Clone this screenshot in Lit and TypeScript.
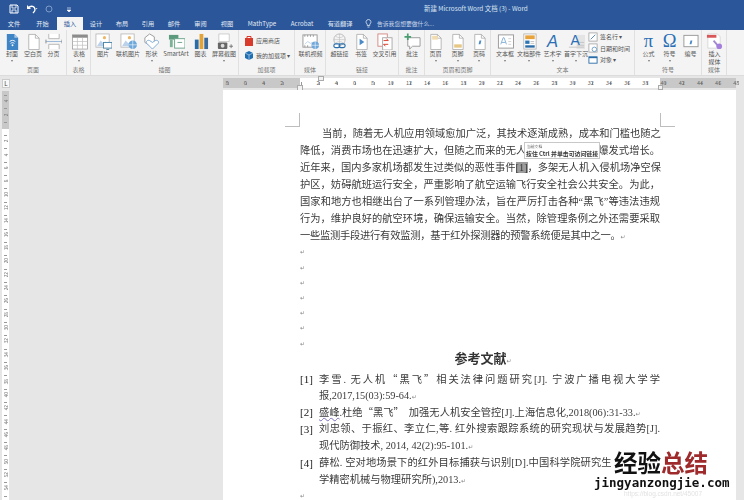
import { LitElement, html, css, svg } from "lit";
import { customElement } from "lit/decorators.js";

const B = "#2e75b6", O = "#e8a33d", R = "#d83b2b", P = "#fff";
const page = (extra: any = "") => svg`<path d="M4 1.5h7l4 4v12H4z" fill="${P}" stroke="#a6a6a6" stroke-width=".8"/><path d="M11 1.5v4h4" fill="none" stroke="#a6a6a6" stroke-width=".8"/>${extra}`;
const icons: Record<string, any> = {
  cover: svg`<path d="M3 1h8l4 4v13H3z" fill="#3f84c4"/><path d="M11 1v4h4z" fill="#a9c9e8"/><path d="M6 9c2-1.6 4-1.6 6 0M7 11c1.4-1 2.6-1 4 0" stroke="#fff" fill="none"/><circle cx="9" cy="13" r="1" fill="#fff"/>`,
  blank: page(),
  brk: svg`<path d="M4 1v5h11V1M4 17v-5h11v5" fill="#fff" stroke="#a6a6a6" stroke-width=".8"/><path d="M1 9h17" stroke="#7fa8cf" stroke-width=".8"/><path d="M1 7v4M18 7v4" stroke="#888"/>`,
  table: svg`<rect x="1.500" y="2" width="16" height="15" fill="#fff" stroke="#999" stroke-width=".8"/><path d="M1.500 2h16v3h-16z" fill="#8c8c8c"/><path d="M1.500 9h16M1.500 13h16M6.800 5v12M12.200 5v12" stroke="#bcbcbc" stroke-width=".7"/>`,
  pic: svg`<rect x="1" y="1" width="14" height="14" fill="#fff" stroke="#b0b0b0" stroke-width=".8"/><path d="M2 14l4-6 3 3 2-2 3 5z" fill="#bcd2ea"/><circle cx="10" cy="5" r="1.700" fill="#eeb765"/><rect x="9" y="10" width="9" height="6" fill="#fff" stroke="#4a85a8"/><path d="M12 17.500h3" stroke="#4a85a8"/>`,
  onpic: svg`<rect x="1" y="1" width="14" height="14" fill="#fff" stroke="#b0b0b0" stroke-width=".8"/><path d="M2 14l4-6 3 3 2-2 3 5z" fill="#bcd2ea"/><circle cx="10" cy="5" r="1.700" fill="#eeb765"/><circle cx="13.500" cy="12.500" r="4.500" fill="#6ea7da"/><path d="M9 12.500h9M13.500 8v9" stroke="#fff" stroke-width=".6"/>`,
  shape: svg`<path d="M2 5l5-4 5 3 0 6-5 3-5-3z" fill="#fff" stroke="#999"/><path d="M10 17l-6-6c-1.500-2 1-4 3-3l3 2 3-2c2-1 4.500 1 3 3z" fill="#fff" stroke="#7aa9d6"/>`,
  smart: svg`<rect x="1" y="2" width="10" height="5" fill="#5c9a7e"/><rect x="2" y="7" width="3" height="8" fill="#7cb398"/><rect x="7" y="6" width="11" height="10" fill="#fff" stroke="#6aa58a"/><path d="M10 10h5" stroke="#6aa58a"/>`,
  chart: svg`<rect x="3" y="7" width="4" height="10" fill="#2a6ca8"/><rect x="8" y="1" width="4" height="16" fill="#e0a43a"/><rect x="13" y="5" width="4" height="12" fill="#3b6a9c"/>`,
  shot: svg`<path d="M3 1h11v8H3z" fill="#fff" stroke="#bbb" stroke-width=".7"/><rect x="2" y="10" width="10" height="7" rx="1" fill="#666"/><circle cx="7" cy="13.500" r="2" fill="#ddd"/><path d="M14 14h4M16 12v4" stroke="#777"/>`,
  video: svg`<rect x="1" y="2" width="15" height="13" fill="#fff" stroke="#999"/><path d="M3 2v2M6 2v2M9 2v2M12 2v2M3 13v2M6 13v2" stroke="#999"/><path d="M3 12l3-3 3 2 2-1 3 2" stroke="#bcd2ea" fill="none"/><circle cx="14" cy="13" r="4" fill="#6ea7da"/><path d="M10 13h8M14 9v8" stroke="#fff" stroke-width=".6"/>`,
  link: svg`<circle cx="9" cy="7" r="6" fill="none" stroke="#aaa" stroke-width=".8"/><path d="M3 7h12M9 1v12M5 3.500c3 2 5 2 8 0M5 10.500c3-2 5-2 8 0" stroke="#bbb" stroke-width=".6" fill="none"/><rect x="3" y="11.500" width="6.500" height="4" rx="2" fill="#fff" stroke="#2a6ca8" stroke-width="1.200"/><rect x="8.500" y="11.500" width="6.500" height="4" rx="2" fill="none" stroke="#2a6ca8" stroke-width="1.200"/>`,
  mark: page(svg`<path d="M7 6l5 3.500-5 3.500z" fill="#4a8ac6"/>`),
  xref: svg`<rect x="2" y="1" width="10" height="13" fill="#fff" stroke="#d58a85"/><rect x="7" y="5" width="10" height="13" fill="#fff" stroke="#aaa"/><path d="M8 8h5l-2-2M13 12H8l2 2" stroke="${R}" fill="none"/>`,
  note: svg`<path d="M4 5h13v9H9l-3 3v-3H4z" fill="#fff" stroke="#999"/><path d="M4 .5v7M.5 4h7" stroke="#4a9f72" stroke-width="1.800"/>`,
  head: page(svg`<rect x="5.500" y="3" width="6" height="4" fill="#f0dcb0"/>`),
  foot: page(svg`<rect x="5.500" y="12" width="8" height="3.500" fill="#e6c884"/>`),
  num: page(svg`<path d="M8 12l1-4h2l-1 4z" fill="#4a8ac6"/>`),
  tbox: svg`<rect x="1.500" y="2" width="16" height="14" fill="#fff" stroke="#999"/><path d="M4 12l2.500-7h1l2.500 7M5 10h4" fill="none" stroke="#7aa9d6" stroke-width=".9"/><path d="M12 6h3M12 9h3M12 12h3" stroke="#bbb" stroke-width=".7"/>`,
  parts: svg`<rect x="3" y="1" width="13" height="16" fill="#fff" stroke="#aaa" stroke-width=".8"/><rect x="4.500" y="2.500" width="10" height="4" fill="${O}"/><rect x="4.500" y="8" width="4.500" height="3.500" fill="${B}"/><rect x="4.500" y="13" width="10" height="2.500" fill="#2a6ca8"/><path d="M10 9h4M10 11h4" stroke="#aaa" stroke-width=".7"/>`,
  drop: svg`<rect x="9" y="2" width="9" height="15" fill="#e4e4e4"/><path d="M10 10h7M10 13h7M1 15h16" stroke="#c4c4c4"/>`,
  eqn: svg`<rect x="2" y="2.500" width="15" height="12" fill="#fff" stroke="#999"/><path d="M8 12l1-4h2l-1 4z" fill="#4a8ac6"/>`,
  media: svg`<path d="M2 1h10l3 3v12H2z" fill="#fff" stroke="#ccc" stroke-width=".7"/><rect x="1" y="2" width="10" height="3" fill="#d8585a"/><path d="M8 8l5 6" stroke="#a58ad0" stroke-width="2"/><circle cx="14" cy="14" r="3" fill="#a57fdc"/>`,
  store: svg`<path d="M1 3h8v8H1z" fill="${R}"/><path d="M3 3V1.500h4V3" fill="none" stroke="${R}"/>`,
  addin: svg`<path d="M5 1l4 2v5l-4 2-4-2V3z" fill="#1f6fb5"/><path d="M1 3l4 2 4-2M5 5v5" stroke="#fff" stroke-width=".5" fill="none"/>`,
  sign: svg`<rect x="1" y="1" width="9" height="9" fill="#fff" stroke="#999" stroke-width=".8"/><path d="M3 8l5-5" stroke="#4a85b8"/>`,
  date: svg`<rect x="1" y="1" width="9" height="9" fill="#fff" stroke="#999" stroke-width=".8"/><circle cx="7" cy="7" r="2.500" fill="#fff" stroke="#4a85b8" stroke-width=".8"/>`,
  obj: svg`<rect x="1" y="2" width="9" height="7" fill="#fff" stroke="#2a6ca8"/><path d="M1 2h9v1.500H1z" fill="#2a6ca8"/>`,
};

type Item = { l: string; w: number; i?: string; g?: string; c?: number; kind?: string };
type Group = { name: string; w: number; pad: number; items: Item[] };
const groups: Group[] = [
  { name: "页面", w: 67, pad: 2, items: [{ l: "封面", w: 20, i: "cover", c: 1 }, { l: "空白页", w: 22, i: "blank" }, { l: "分页", w: 19, i: "brk" }] },
  { name: "表格", w: 24, pad: 2, items: [{ l: "表格", w: 20, i: "table", c: 1 }] },
  { name: "插图", w: 148, pad: 2, items: [{ l: "图片", w: 20, i: "pic" }, { l: "联机图片", w: 30, i: "onpic" }, { l: "形状", w: 17, i: "shape", c: 1 }, { l: "SmartArt", w: 32, i: "smart" }, { l: "图表", w: 17, i: "chart" }, { l: "屏幕截图", w: 30, i: "shot", c: 1 }] },
  { name: "加载项", w: 56, pad: 5, items: [{ l: "", w: 50, kind: "addins" }] },
  { name: "媒体", w: 31, pad: 1, items: [{ l: "联机视频", w: 29, i: "video" }] },
  { name: "链接", w: 73, pad: 2, items: [{ l: "超链接", w: 23, i: "link" }, { l: "书签", w: 20, i: "mark" }, { l: "交叉引用", w: 27, i: "xref" }] },
  { name: "批注", w: 26, pad: 2, items: [{ l: "批注", w: 22, i: "note" }] },
  { name: "页眉和页脚", w: 66, pad: 0, items: [{ l: "页眉", w: 21, i: "head", c: 1 }, { l: "页脚", w: 23, i: "foot", c: 1 }, { l: "页码", w: 20, i: "num", c: 1 }] },
  { name: "文本", w: 144, pad: 2, items: [{ l: "文本框", w: 24, i: "tbox", c: 1 }, { l: "文档部件", w: 24, i: "parts", c: 1 }, { l: "艺术字", w: 23, g: "A", c: 1 }, { l: "首字下沉", w: 24, i: "drop", c: 1 }, { l: "", w: 46, kind: "text" }] },
  { name: "符号", w: 67, pad: 3, items: [{ l: "公式", w: 21, g: "π", c: 1 }, { l: "符号", w: 21, g: "Ω", c: 1 }, { l: "编号", w: 21, i: "eqn" }] },
  { name: "媒体", w: 25, pad: 0, items: [{ l: "插入\n媒体", w: 25, i: "media" }] },
];
const tabs: [string, number][] = [["文件", 28], ["开始", 29], ["插入", 26], ["设计", 26], ["布局", 26], ["引用", 26], ["邮件", 26], ["审阅", 27], ["视图", 26], ["MathType", 44], ["Acrobat", 36], ["有道翻译", 40]];
const rulerNums = ["8", "6", "4", "2", "", "2", "4", "6", "8", "10", "12", "14", "16", "18", "20", "22", "24", "26", "28", "30", "32", "34", "36", "38", "40", "42", "44", "46", "48"];
const vNums = ["4", "2", "", "2", "4", "6", "8", "10", "12", "14", "16", "18", "20", "22", "24", "26", "28", "30", "32", "34", "36", "38", "40", "42", "44", "46", "48", "50", "52", "54"];

@customElement("app-root")
export class AppRoot extends LitElement {
  static styles = css`
    :host { display: block; width: 744px; height: 500px; overflow: hidden; position: relative; background: #e6e6e6;
      font-family: "Liberation Serif", "Noto Sans CJK SC", serif; color: #3a3a3a; }
    .ui { font-family: "Noto Sans CJK SC", "Noto Sans", sans-serif; filter: blur(.3px); position: relative; }
    .top { background: #2b579a; height: 30px; color: #fff; display: flex; flex-direction: column; }
    .title { height: 17px; display: flex; align-items: center; }
    .qat { display: flex; align-items: center; gap: 7px; padding-left: 9px; width: 415px; flex: none; }
    .name { color: #dbe5f2; font-size: 6.400px; white-space: nowrap; }
    .tabs { display: flex; height: 13px; align-items: stretch; font-size: 6.200px; }
    .tab { display: flex; align-items: center; justify-content: center; color: #e4ebf5; white-space: nowrap; }
    .tab.on { background: #f4f4f4; color: #2b579a; }
    .tell { display: flex; align-items: center; gap: 5px; margin-left: 5px; color: #c9d6ea; font-size: 5.800px; }
    .ribbon { display: flex; height: 45px; background: #f4f4f4; border-bottom: 1px solid #dcdcdc; }
    .group { display: flex; flex-direction: column; border-right: 1px solid #e0e0e0; box-sizing: border-box; height: 100%; flex: none; }
    .items { display: flex; height: 35px; }
    .gname { height: 10px; line-height: 10px; text-align: center; font-size: 6px; color: #777; }
    .btn { display: flex; flex-direction: column; align-items: center; flex: none; font-size: 6px; color: #555; padding-top: 3px; box-sizing: border-box; text-align: center; }
    .lbl { white-space: pre; line-height: 7.500px; }
    .ic { width: 17px; height: 17px; display: block; flex: none; }
    .glyph { height: 17px; line-height: 16px; font-family: "Liberation Serif", serif; color: #2a6fb5; font-size: 18.500px; }
    .glyph.a { font-style: italic; font-family: "Liberation Sans", sans-serif; font-size: 16.500px; }
    .caret { width: 0; height: 0; border: 1.500px solid transparent; border-top: 2px solid #777; border-bottom: 0; margin-top: 2px; }
    .col { display: flex; flex-direction: column; gap: 2.500px; padding-top: 2px; font-size: 6px; color: #555; }
    .row { display: flex; align-items: center; gap: 2px; white-space: nowrap; height: 9px; }
    .addins { padding-top: 5.500px; gap: 6px; }
    .drop { position: relative; }
    .dropA { position: absolute; left: 3px; top: 0; font-family: "Liberation Sans", sans-serif; color: #2a6fb5; font-size: 14px; line-height: 14px; }
    .rulerbar { height: 14px; display: flex; align-items: center; background: #e6e6e6; position: relative; }
    .tabbox { width: 8px; height: 9px; margin-left: 2px; background: #f8f8f8; border: 1px solid #ccc; box-sizing: border-box; font-size: 6px; line-height: 7px; text-align: center; color: #444; flex: none; }
    .hr { margin-left: 213px; width: 513px; height: 10px; display: flex;
      background:
        repeating-linear-gradient(90deg, #999 0 1px, transparent 1px 18.200px) 4.500px 50% / 100% 3px no-repeat,
        linear-gradient(90deg, #c8c8c8 77px, #fff 77px, #fff 437px, #c8c8c8 437px);
      font-size: 5.500px; line-height: 10px; color: #666; }
    .hr span { flex: 0 0 18.200px; text-align: center; transform: translateX(-5px); }
    .mk { position: absolute; background: #f2f2f2; border: 1px solid #aaa; box-sizing: border-box; }
    .mk.top { left: 318px; top: 0; width: 6px; height: 5px; }
    .mk.hang { left: 297px; top: 9px; width: 6px; height: 6px; }
    .mk.right { left: 658px; top: 9px; width: 5px; height: 5px; }
    .main { display: flex; height: 411px; }
    .vr { margin: 1px 0 0 2px; width: 7px; height: 410px; padding-top: 3.300px; box-sizing: border-box; flex: none; display: flex; flex-direction: column; overflow: hidden;
      background:
        repeating-linear-gradient(180deg, #999 0 1px, transparent 1px 13.350px) 50% 3.500px / 3px 100% no-repeat,
        linear-gradient(180deg, #c8c8c8 38px, #fff 38px);
      font-size: 4.800px; color: #777; text-align: center; font-family: "Noto Sans CJK SC", sans-serif; filter: blur(.3px); }
    .vr span { flex: 0 0 13.350px; line-height: 7px; writing-mode: vertical-rl; transform: rotate(180deg); display: flex; align-items: center; justify-content: center; }
    .page { margin-left: 214px; width: 513px; height: 411px; background: #fff; flex: none; padding: 23px 76px 0 77px; box-sizing: border-box; position: relative; overflow: hidden; filter: blur(.3px); }
    .crops { display: flex; justify-content: space-between; height: 11.500px; margin: 0 -15px; }
    .crop { width: 15px; height: 14px; border-bottom: 1px solid #bdbdbd; box-sizing: border-box; }
    .crop.l { border-right: 1px solid #bdbdbd; }
    .crop.r { border-left: 1px solid #bdbdbd; }
    .line { height: 17.150px; line-height: 17.150px; font-size: 10.280px; text-align: justify; text-align-last: justify; white-space: nowrap; }
    .line.first { text-indent: 22px; }
    .line.last { text-align-last: left; letter-spacing: -.25px; }
    .sel { background: #9c9c9c; }
    .m { font-family: "DejaVu Sans", sans-serif; font-size: 6px; color: #888; letter-spacing: 0; font-weight: 400; }
    .empty { height: 15.200px; line-height: 15.200px; }
    h1 { margin: 0 0 5px; height: 15px; line-height: 15px; font-size: 13px; text-align: center; font-weight: 700; color: #333; padding-left: 6px; }
    .ref { display: grid; grid-template-columns: 19px 1fr; font-size: 10.280px; }
    .num { height: 16.800px; line-height: 16.800px; font-size: 11px; color: #222; }
    .rl { height: 16.800px; line-height: 16.800px; white-space: nowrap; }
    .rl.j { text-align: justify; text-align-last: justify; }
    .rl.cut { letter-spacing: .12px; }
    .cj { font-family: "Noto Sans CJK SC", sans-serif; }
    .wavy { text-decoration: underline wavy #7a6fc0 .6px; }
    .tip { position: absolute; left: 301px; top: 52px; width: 76px; height: 17px; box-sizing: border-box; background: #fff; border: 1px solid #c8c8c8; padding: 1px; color: #555; white-space: nowrap; font-family: "Noto Sans CJK SC", sans-serif; }
    .t1 { font-size: 3.800px; height: 6px; line-height: 6px; padding-left: 1px; }
    .t2 { font-size: 5.900px; height: 7px; line-height: 7px; color: #333; font-weight: 700; }
    .wm { position: absolute; left: 594px; top: 450px; width: 136px; font-family: "Noto Sans CJK SC", sans-serif; font-weight: 700; }
    .wm1 { font-size: 23.500px; line-height: 25px; color: #111; padding-left: 20px; white-space: nowrap; background: linear-gradient(90deg, transparent 18px, #fff 20px); }
    .wm1 i { font-style: normal; color: #9e2a2b; }
    .wm2 { font-family: "DejaVu Sans Mono", monospace; font-size: 12.500px; line-height: 13px; color: #111; margin-top: 1px; white-space: nowrap; }
    .faint { position: absolute; left: 624px; top: 489.500px; font-family: "Liberation Sans", sans-serif; font-size: 6.500px; line-height: 7px; color: #e2e2e2; white-space: nowrap; }
  `;

  private item(it: Item) {
    if (it.kind === "addins") {
      return html`<div class="col addins" style="width:${it.w}px">
        <div class="row"><svg width="10" height="11" viewBox="0 0 10 11">${icons.store}</svg>应用商店</div>
        <div class="row"><svg width="10" height="11" viewBox="0 0 10 11">${icons.addin}</svg>我的加载项 ▾</div>
      </div>`;
    }
    if (it.kind === "text") {
      return html`<div class="col" style="width:${it.w}px">
        <div class="row"><svg width="10" height="10" viewBox="0 0 11 11">${icons.sign}</svg>签名行 ▾</div>
        <div class="row"><svg width="10" height="10" viewBox="0 0 11 11">${icons.date}</svg>日期和时间</div>
        <div class="row"><svg width="10" height="10" viewBox="0 0 11 11">${icons.obj}</svg>对象 ▾</div>
      </div>`;
    }
    return html`<div class="btn" style="width:${it.w}px">
      ${it.g
        ? html`<div class="glyph ${it.g === "A" ? "a" : ""}">${it.g}</div>`
        : it.i === "drop"
          ? html`<div class="drop"><svg class="ic" viewBox="0 0 18 18">${icons.drop}</svg><span class="dropA">A</span></div>`
          : html`<svg class="ic" viewBox="0 0 18 18">${icons[it.i!]}</svg>`}
      <span class="lbl">${it.l}</span>
      ${it.c ? html`<div class="caret"></div>` : ""}
    </div>`;
  }

  render() {
    return html`
      <div class="ui">
        <div class="top">
          <div class="title">
            <div class="qat">
              <svg width="10" height="10" viewBox="0 0 10 10"><path d="M1 1h7l1 1v7H1z" fill="none" stroke="#fff"/><path d="M3 1v3h4V1M3 9V6h4v3" fill="none" stroke="#fff" stroke-width=".8"/></svg>
              <svg width="12" height="10" viewBox="0 0 12 10"><path d="M2 4c3-3 7-2 7 2 0 1-1 2-2 3" fill="none" stroke="#fff" stroke-width="1.300"/><path d="M1 1v4h4z" fill="#fff"/><path d="M9.500 4l2 0-1 1.500z" fill="#cdd9ea"/></svg>
              <svg width="8" height="8" viewBox="0 0 8 8"><circle cx="4" cy="4" r="3" fill="none" stroke="#7f9cc6"/></svg>
              <svg width="8" height="8" viewBox="0 0 8 8" style="margin-left:5px"><path d="M2 3h4M2 5l2 2 2-2z" stroke="#fff" stroke-width=".6" fill="#fff"/></svg>
            </div>
            <div class="name">新建 Microsoft Word 文档 (3) - Word</div>
          </div>
          <div class="tabs">
            ${tabs.map(([t, w]) => html`<div class="tab ${t === "插入" ? "on" : ""}" style="width:${w}px">${t}</div>`)}
            <div class="tell">
              <svg width="7" height="9" viewBox="0 0 7 9"><path d="M3.500 .5a2.500 2.500 0 0 1 1.300 4.600V6.500H2.200V5.100A2.500 2.500 0 0 1 3.500 .5zM2.500 8h2" fill="none" stroke="#dfe7f3" stroke-width=".8"/></svg>
              告诉我您想要做什么...
            </div>
          </div>
        </div>
        <div class="ribbon">
          ${groups.map((g) => html`<div class="group" style="width:${g.w}px">
            <div class="items" style="padding-left:${g.pad}px">${g.items.map((it) => this.item(it))}</div>
            <div class="gname">${g.name}</div>
          </div>`)}
        </div>
        <div class="rulerbar">
          <div class="tabbox">L</div>
          <div class="hr">${rulerNums.map((n) => html`<span>${n}</span>`)}</div>
          <div class="mk top"></div>
          <div class="mk hang"></div>
          <div class="mk right"></div>
        </div>
      </div>
      <div class="main">
        <div class="vr">${vNums.map((n) => html`<span>${n}</span>`)}</div>
        <div class="page">
          <div class="crops"><div class="crop l"></div><div class="crop r"></div></div>
          <div class="line first">当前，随着无人机应用领域愈加广泛，其技术逐渐成熟，成本和门槛也随之</div>
          <div class="line">降低，消费市场也在迅速扩大，但随之而来的无人机黑飞事件也呈爆发式增长。</div>
          <div class="line">近年来，国内多家机场都发生过类似的恶性事件<span class="sel">[1]</span>，多架无人机入侵机场净空保</div>
          <div class="line">护区，妨碍航班运行安全，严重影响了航空运输飞行安全社会公共安全。为此，</div>
          <div class="line">国家和地方也相继出台了一系列管理办法，旨在严厉打击各种“黑飞”等违法违规</div>
          <div class="line">行为，维护良好的航空环境，确保运输安全。当然，除管理条例之外还需要采取</div>
          <div class="line last">一些监测手段进行有效监测，基于红外探测器的预警系统便是其中之一。<span class="m">↵</span></div>
          ${[0, 1, 2, 3, 4, 5, 6].map(() => html`<div class="empty m">↵</div>`)}
          <h1>参考文献<span class="m">↵</span></h1>
          <div class="ref"><div class="num">[1]</div><div>
            <div class="rl j">李雪. 无人机<span class="cj">“黑飞”</span>相关法律问题研究[J]. 宁波广播电视大学学</div>
            <div class="rl">报,2017,15(03):59-64.<span class="m">↵</span></div></div></div>
          <div class="ref"><div class="num">[2]</div><div>
            <div class="rl"><span class="wavy">盛峰</span>.杜绝<span class="cj">“黑飞”</span>&nbsp;&nbsp;加强无人机安全管控[J].上海信息化,2018(06):31-33.<span class="m">↵</span></div></div></div>
          <div class="ref"><div class="num">[3]</div><div>
            <div class="rl j">刘忠领、于振红、李立仁,等. 红外搜索跟踪系统的研究现状与发展趋势[J].</div>
            <div class="rl">现代防御技术, 2014, 42(2):95-101.<span class="m">↵</span></div></div></div>
          <div class="ref"><div class="num">[4]</div><div>
            <div class="rl cut">薛松. 空对地场景下的红外目标捕获与识别[D].中国科学院研究生</div>
            <div class="rl">学精密机械与物理研究所),2013.<span class="m">↵</span></div></div></div>
          <div class="empty m">↵</div>
          <div class="tip"><div class="t1">当前文档</div><div class="t2">按住 Ctrl 并单击可访问链接</div></div>
        </div>
      </div>
      <div class="wm">
        <div class="wm1">经验<i>总结</i></div>
        <div class="wm2">jingyanzongjie.com</div>
      </div>
      <div class="faint">https://blog.csdn.net/45007</div>
    `;
  }
}
